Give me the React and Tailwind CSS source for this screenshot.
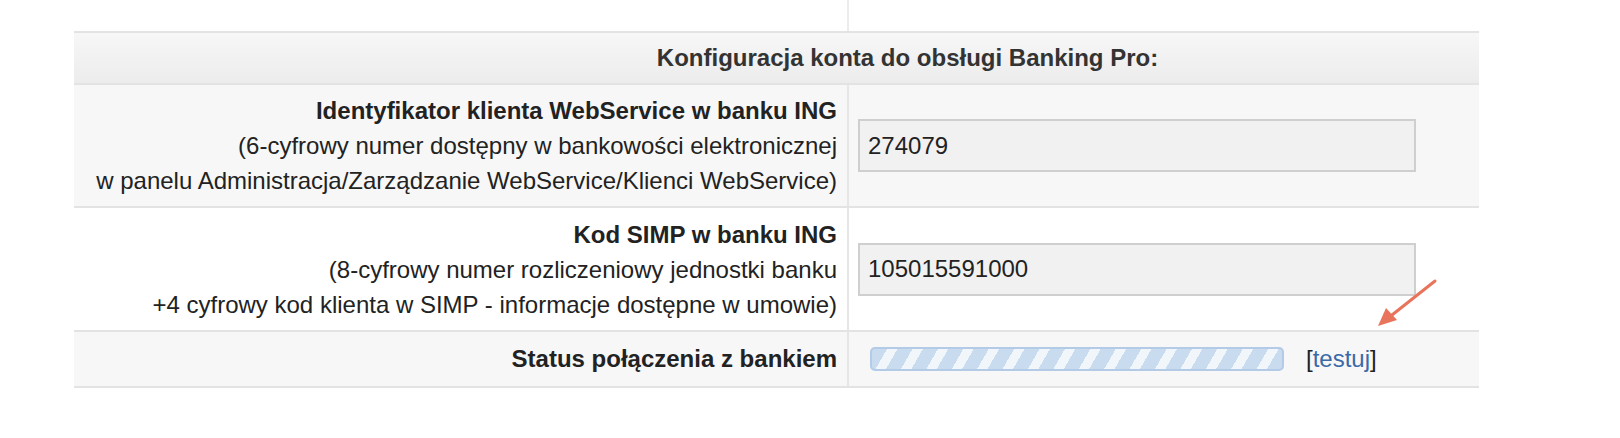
import React from "react";

function Label({ title, lines }) {
  return (
    <div className="flex flex-col items-end justify-center pr-[10px] text-right leading-[35px] text-[24px] text-[#222]">
      <div className="font-bold">{title}</div>
      {lines.map((l, i) => (
        <div key={i}>{l}</div>
      ))}
    </div>
  );
}

function Input({ value }) {
  return (
    <div className="flex h-[53px] w-[558px] items-center border-2 border-[#cfcfcf] bg-[#f1f1f1] pl-[8px] text-[24px] text-[#222]">
      {value}
    </div>
  );
}

export default function App() {
  return (
    <div
      className="relative h-[438px] w-[1620px] bg-white"
      style={{ fontFamily: '"Liberation Sans", Arial, Helvetica, sans-serif' }}
    >
      <div className="ml-[74px] w-[1405px]">
        {/* previous row (cut off) */}
        <div className="grid h-[33px] grid-cols-[775px_1fr] border-b-2 border-[#e3e3e3]">
          <div className="border-r-2 border-[#ececec]" />
          <div />
        </div>
        {/* header */}
        <div className="flex h-[52px] items-center justify-center border-b-2 border-[#e3e3e3] bg-gradient-to-b from-[#f7f7f7] to-[#ececec] pl-[262px] text-[24px] font-bold text-[#333]">
          Konfiguracja konta do obsługi Banking Pro:
        </div>
        {/* row 1 */}
        <div className="grid h-[123px] grid-cols-[775px_1fr] border-b-2 border-[#e3e3e3] bg-[#f7f7f7]">
          <div className="flex items-center justify-end border-r-2 border-[#e6e6e6]">
            <Label
              title="Identyfikator klienta WebService w banku ING"
              lines={[
                "(6-cyfrowy numer dostępny w bankowości elektronicznej",
                "w panelu Administracja/Zarządzanie WebService/Klienci WebService)",
              ]}
            />
          </div>
          <div className="flex items-center pl-[9px]">
            <Input value="274079" />
          </div>
        </div>
        {/* row 2 */}
        <div className="grid h-[124px] grid-cols-[775px_1fr] border-b-2 border-[#e3e3e3] bg-white">
          <div className="flex items-center justify-end border-r-2 border-[#e6e6e6]">
            <Label
              title="Kod SIMP w banku ING"
              lines={[
                "(8-cyfrowy numer rozliczeniowy jednostki banku",
                "+4 cyfrowy kod klienta w SIMP - informacje dostępne w umowie)",
              ]}
            />
          </div>
          <div className="flex items-center pl-[9px]">
            <Input value="105015591000" />
          </div>
        </div>
        {/* row 3 */}
        <div className="grid h-[56px] grid-cols-[775px_1fr] border-b-2 border-[#e3e3e3] bg-[#f7f7f7]">
          <div className="flex items-center justify-end border-r-2 border-[#e6e6e6] pr-[10px] text-[24px] font-bold text-[#222]">
            Status połączenia z bankiem
          </div>
          <div className="flex items-center gap-[22px] pl-[21px]">
            <div
              className="h-[24px] w-[414px] rounded-[5px] border-2 border-[#b3cbe7]"
              style={{
                backgroundColor: "#c9dbef",
                backgroundImage:
                  "repeating-linear-gradient(-60deg, rgba(255,255,255,0) 0px, rgba(255,255,255,0) 13px, rgba(255,255,255,0.75) 13px, rgba(255,255,255,0.75) 22px)",
              }}
            />
            <span className="text-[24px] text-[#222]">
              [<span className="text-[#3a6aa8]">testuj</span>]
            </span>
          </div>
        </div>
      </div>
      {/* annotation arrow */}
      <svg
        className="pointer-events-none absolute left-0 top-0"
        width="1620"
        height="438"
      >
        <line x1="1435" y1="281" x2="1392" y2="315" stroke="#e8745c" strokeWidth="3" strokeLinecap="round" />
        <polygon points="1378,326 1386,308 1397,320" fill="#e8745c" />
      </svg>
    </div>
  );
}
